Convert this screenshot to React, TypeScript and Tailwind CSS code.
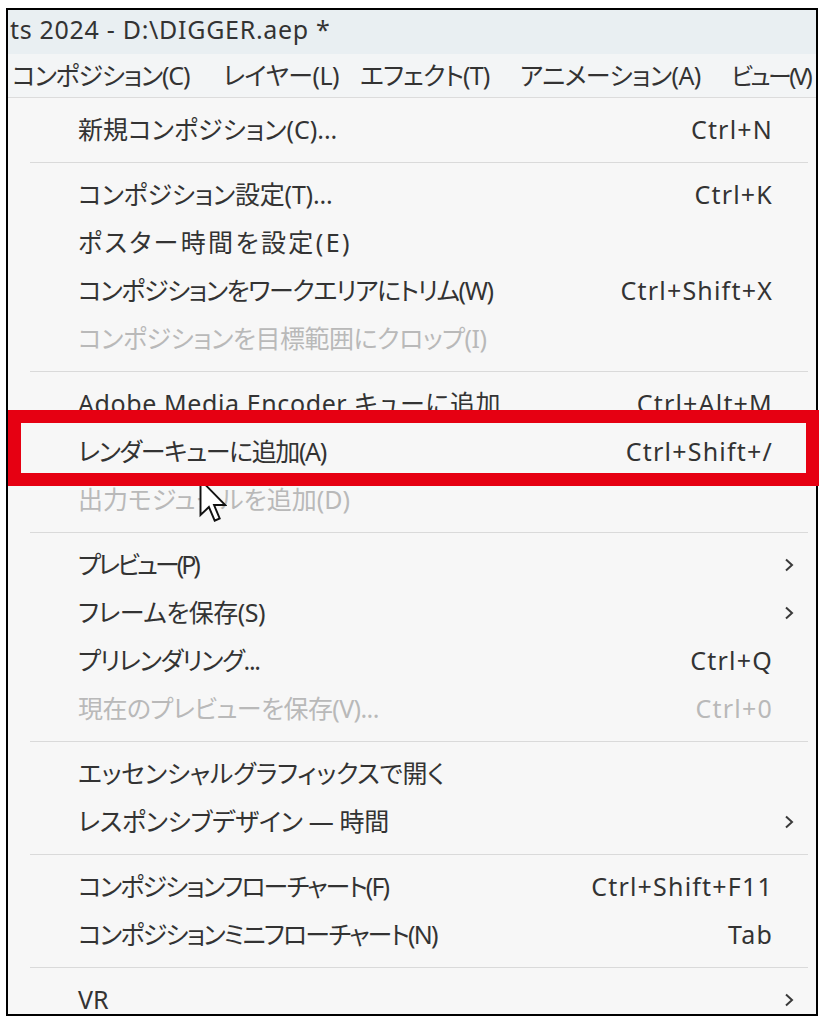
import React from "react";

type Item = { l: string; s?: string; sub?: boolean; dis?: boolean; t?: string };

const sections: Item[][] = [
  [{ l: "新規コンポジション(C)...", s: "Ctrl+N" }],
  [
    { l: "コンポジション設定(T)...", s: "Ctrl+K", t: "tracking-[-0.2px]" },
    { l: "ポスター時間を設定(E)", t: "tracking-[2.4px]" },
    { l: "コンポジションをワークエリアにトリム(W)", s: "Ctrl+Shift+X", t: "tracking-[-1.4px]" },
    { l: "コンポジションを目標範囲にクロップ(I)", dis: true, t: "tracking-[-0.5px]" },
  ],
  [
    { l: "Adobe Media Encoder キューに追加", s: "Ctrl+Alt+M", t: "tracking-[0.6px]" },
    { l: "レンダーキューに追加(A)", s: "Ctrl+Shift+/", t: "tracking-[-1.4px]" },
    { l: "出力モジュールを追加(D)", dis: true },
  ],
  [
    { l: "プレビュー(P)", sub: true, t: "tracking-[-3px]" },
    { l: "フレームを保存(S)", sub: true, t: "tracking-[-0.5px]" },
    { l: "プリレンダリング...", s: "Ctrl+Q", t: "tracking-[-1.3px]" },
    { l: "現在のプレビューを保存(V)...", s: "Ctrl+0", dis: true, t: "tracking-[-0.6px]" },
  ],
  [
    { l: "エッセンシャルグラフィックスで開く", t: "tracking-[-0.2px]" },
    { l: "レスポンシブデザイン — 時間", sub: true, t: "tracking-[-0.3px]" },
  ],
  [
    { l: "コンポジションフローチャート(F)", s: "Ctrl+Shift+F11", t: "tracking-[-1.9px]" },
    { l: "コンポジションミニフローチャート(N)", s: "Tab", t: "tracking-[-1.8px]" },
  ],
  [{ l: "VR", sub: true }],
];

function Chevron() {
  return (
    <svg width="10" height="14" viewBox="0 0 10 14" className="block">
      <polyline points="2,1.5 8,7 2,12.5" fill="none" stroke="#3a3a3a" strokeWidth="2" />
    </svg>
  );
}

function Row({ it }: { it: Item }) {
  const color = it.dis ? "text-[#b9b9b9]" : "text-[#333333]";
  return (
    <div className={`flex h-[48px] items-center pl-[70px] ${color}`}>
      <div className={`flex-1 whitespace-nowrap ${it.t ?? ""}`}>{it.l}</div>
      <div className="mr-[-1px] whitespace-nowrap tracking-[1.2px]">{it.s ?? ""}</div>
      <div className="flex w-[44px] items-center pl-[12px]">{it.sub ? <Chevron /> : null}</div>
    </div>
  );
}

function Sep() {
  return (
    <div className="flex h-[17px] items-center pl-[22px] pr-[8px]">
      <div className="h-px w-full bg-[#dadada]" />
    </div>
  );
}

export default function App() {
  return (
    <div className="relative h-[1024px] w-[824px] overflow-hidden bg-white font-['Noto_Sans','Noto_Sans_CJK_JP',sans-serif] text-[25px] [font-feature-settings:'palt']">
      <div className="ml-[6px] mt-[8px] h-[1008px] w-[812px] overflow-hidden border-2 border-black bg-[#f7f7f7]">
        <div className="flex h-[44px] items-center bg-[#e9eff2] pb-[4px] pl-[2px] text-[#333333]">
          <span className="whitespace-nowrap tracking-[0.7px]">ts 2024 - D:\DIGGER.aep *</span>
        </div>
        <div className="flex h-[44px] items-center border-b border-[#dcdcdc] bg-[#f3f5f6] pl-[4px] text-[#333333]">
          <span className="w-[211px] shrink-0 whitespace-nowrap tracking-[-1.2px]">コンポジション(C)</span>
          <span className="w-[137px] shrink-0 whitespace-nowrap tracking-[-0.5px]">レイヤー(L)</span>
          <span className="w-[160px] shrink-0 whitespace-nowrap tracking-[-0.8px]">エフェクト(T)</span>
          <span className="w-[211px] shrink-0 whitespace-nowrap tracking-[-0.6px]">アニメーション(A)</span>
          <span className="shrink-0 whitespace-nowrap text-[24px] tracking-[-2.6px]">ビュー(V)</span>
        </div>
        <div className="pt-[8px]">
          {sections.map((sec, i) => (
            <div key={i}>
              {i > 0 && <Sep />}
              {sec.map((it, j) => (
                <Row key={j} it={it} />
              ))}
            </div>
          ))}
        </div>
      </div>

      {/* mouse cursor */}
      <svg
        className="absolute left-[199px] top-[478px]"
        width="28"
        height="46"
        viewBox="0 0 13 21"
      >
        <path
          d="M0.7 0.7 L0.7 17 L4.6 13.3 L7.3 19.6 L9.6 18.6 L7 12.4 L12.2 12.4 Z"
          fill="#ffffff"
          stroke="#111111"
          strokeWidth="0.9"
          strokeLinejoin="miter"
        />
      </svg>

      {/* red highlight frame */}
      <div className="absolute left-[8px] top-[410px] h-[76px] w-[811px] border-[13px] border-[#e60012]" />
    </div>
  );
}
